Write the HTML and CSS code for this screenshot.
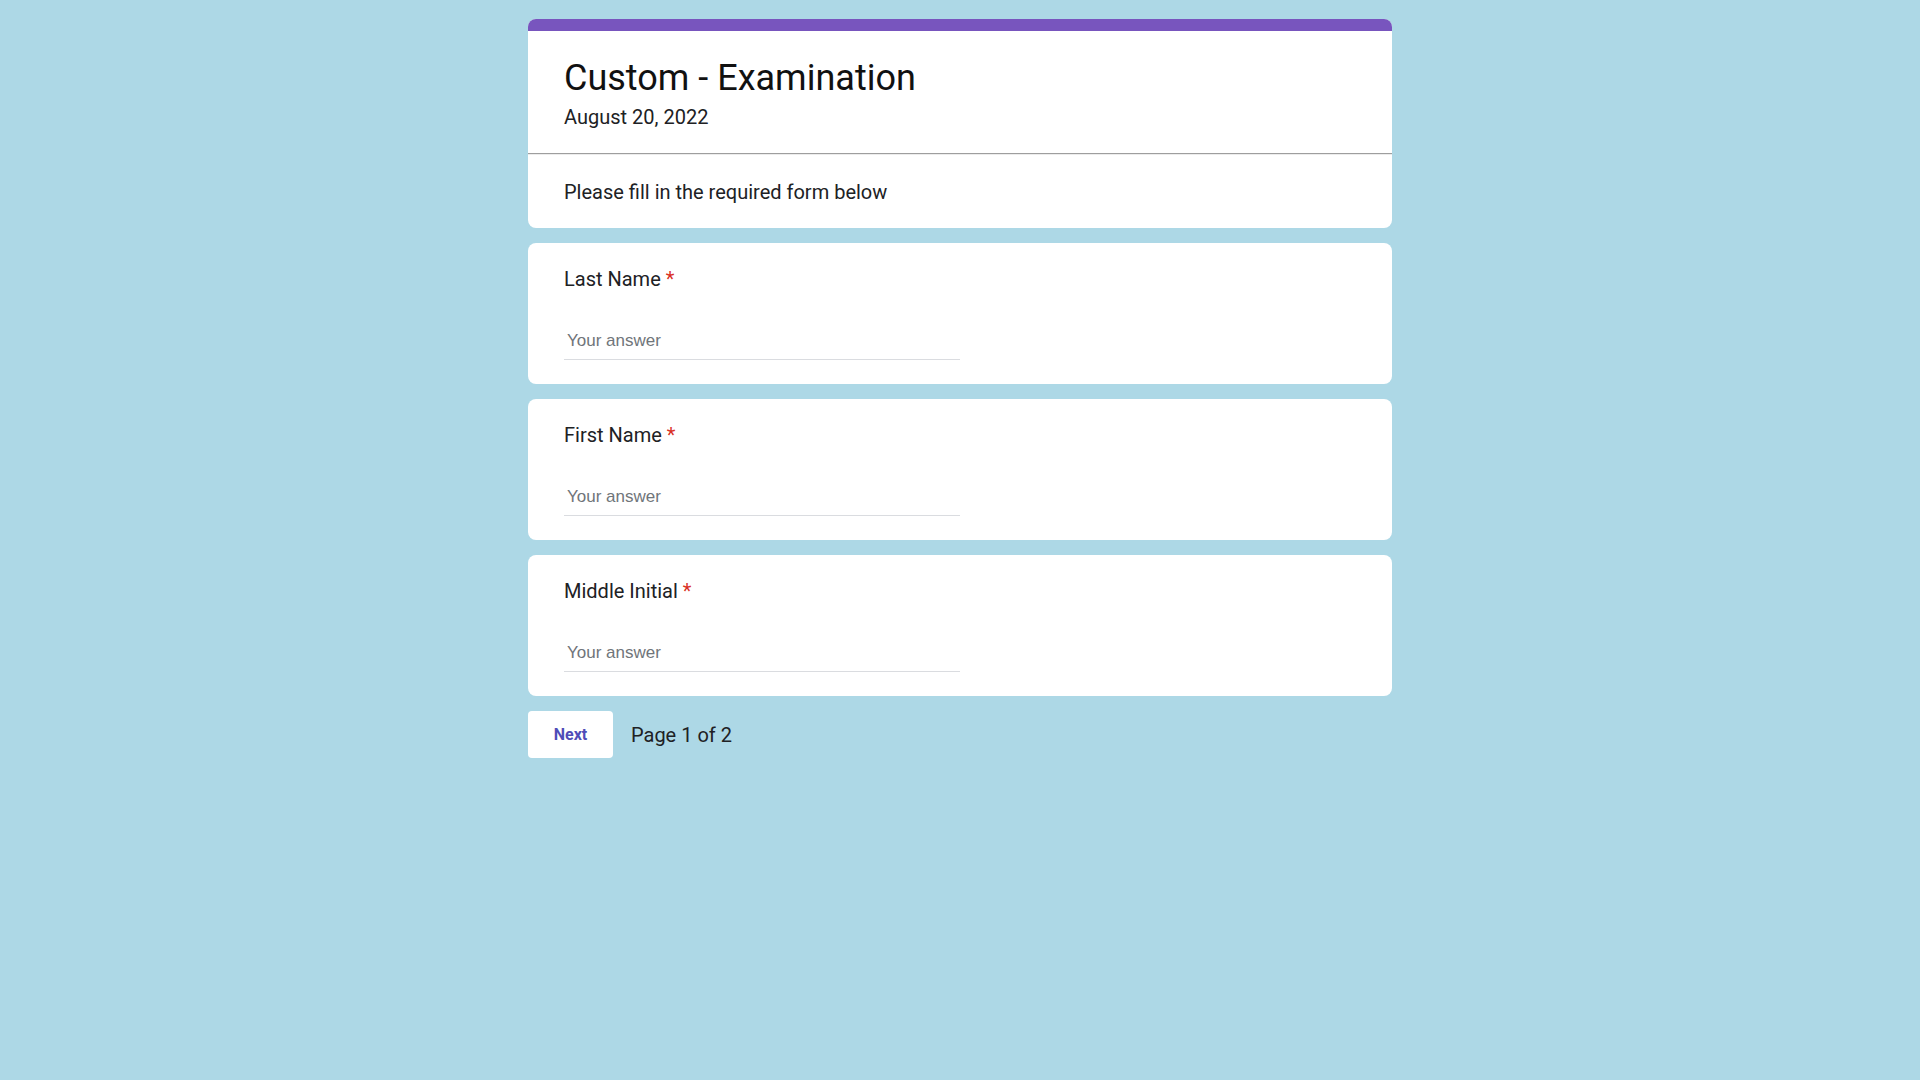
FILE: index.html
```html
<!DOCTYPE html>
<html lang="en">
<head>
<meta charset="utf-8">
<title>Custom - Examination</title>
<link rel="stylesheet" href="styles.css">
</head>
<body>
<main class="form">
  <section class="card intro">
    <div class="intro-bar"></div>
    <header class="intro-head">
      <h1 class="intro-title">Custom - Examination</h1>
      <div class="intro-date">August 20, 2022</div>
    </header>
    <div class="intro-desc">Please fill in the required form below</div>
  </section>

  <section class="card question">
    <label class="q-label" for="last">Last Name <span class="req">*</span></label>
    <input class="q-input" id="last" type="text" placeholder="Your answer">
  </section>

  <section class="card question">
    <label class="q-label" for="first">First Name <span class="req">*</span></label>
    <input class="q-input" id="first" type="text" placeholder="Your answer">
  </section>

  <section class="card question">
    <label class="q-label" for="mi">Middle Initial <span class="req">*</span></label>
    <input class="q-input" id="mi" type="text" placeholder="Your answer">
  </section>

  <div class="nav">
    <button class="btn-next" type="button">Next</button>
    <span class="page-info">Page 1 of 2</span>
  </div>
</main>
</body>
</html>
```

FILE: styles.css
```css
* { box-sizing: border-box; }

html, body {
  margin: 0;
  padding: 0;
}

body {
  background: #add8e6;
  font-family: Roboto, "Noto Sans", Arial, sans-serif;
  color: #202124;
  min-height: 1080px;
}

.form {
  width: 864px;
  margin: 0 auto;
  padding-top: 19px;
  display: flex;
  flex-direction: column;
  gap: 15px;
}

.card {
  background: #ffffff;
  border-radius: 8px;
  overflow: hidden;
}

.intro-bar {
  height: 12px;
  background: #7855be;
}

.intro-head {
  padding: 25px 36px 24px;
  border-bottom: 1px solid #9e9e9e;
}

.intro-title {
  margin: 0;
  font-size: 36px;
  line-height: 44px;
  font-weight: 400;
  color: #111;
}

.intro-date {
  margin-top: 5px;
  font-size: 20px;
  line-height: 24px;
  color: #202124;
}

.intro-desc {
  border-top: 1px solid #ececec;
  padding: 25px 36px 24px;
  font-size: 20px;
  line-height: 24px;
  color: #202124;
}

.question {
  padding: 24px 36px 24px;
  display: flex;
  flex-direction: column;
  align-items: flex-start;
}

.q-label {
  font-size: 20px;
  line-height: 24px;
  color: #202124;
  margin-bottom: 32px;
}

.req {
  color: #d93025;
}

.q-input {
  width: 50%;
  border: none;
  border-bottom: 1px solid #dadce0;
  padding: 8px 3px 8px;
  font-family: "Liberation Sans", Arial, sans-serif;
  font-size: 17px;
  line-height: 20px;
  height: 37px;
  color: #202124;
  background: transparent;
  outline: none;
}

.q-input::placeholder {
  color: #70757a;
}

.nav {
  display: flex;
  align-items: center;
  gap: 18px;
}

.btn-next {
  width: 85px;
  height: 47px;
  border: none;
  border-radius: 4px;
  background: #ffffff;
  color: #4f4cb8;
  font-family: Roboto, Arial, sans-serif;
  font-size: 16px;
  font-weight: 700;
  padding: 0;
  cursor: pointer;
}

.page-info {
  font-size: 20px;
  line-height: 24px;
  color: #202124;
}
```
